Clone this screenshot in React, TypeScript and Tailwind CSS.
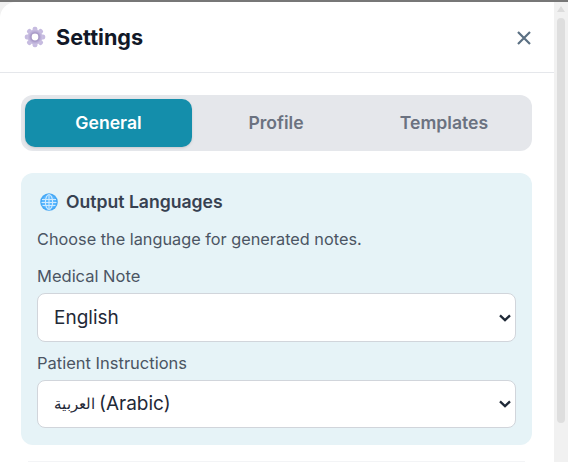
import React from "react";

const font = { fontFamily: "Inter, 'Noto Sans', sans-serif" };

function Gear() {
  const teeth = [0, 45, 90, 135, 180, 225, 270, 315];
  return (
    <svg width="22" height="22" viewBox="0 0 22 22" aria-hidden="true">
      <defs>
        <radialGradient id="g" cx="50%" cy="50%" r="55%">
          <stop offset="30%" stopColor="#8f7fb3" />
          <stop offset="65%" stopColor="#b9acd6" />
          <stop offset="100%" stopColor="#d5cde8" />
        </radialGradient>
      </defs>
      {teeth.map((a) => (
        <rect key={a} x="8.6" y="0.8" width="4.8" height="5" rx="2" fill="#c6bbe0" transform={`rotate(${a} 11 11)`} />
      ))}
      <circle cx="11" cy="11" r="7.6" fill="url(#g)" />
      <circle cx="11" cy="11" r="3.4" fill="#ffffff" />
    </svg>
  );
}

function Globe() {
  return (
    <svg width="18" height="18" viewBox="0 0 18 18" aria-hidden="true">
      <circle cx="9" cy="9" r="8.8" fill="#46a8f5" />
      <circle cx="9" cy="9" r="7.2" fill="#5cb8ff" />
      <g stroke="#cfeaff" strokeWidth="1.1" fill="none">
        <path d="M2 6.500h14M1.500 9.500h15M2.500 12.500h13" />
        <ellipse cx="9" cy="9" rx="3.600" ry="7.500" />
        <path d="M9 2v14" />
      </g>
    </svg>
  );
}

function Field({
  label,
  value,
  options,
  mt,
  h,
  overlay,
}: {
  label: string;
  value: string;
  options: string[];
  mt: string;
  h: string;
  overlay?: React.ReactNode;
}) {
  return (
    <div className={mt}>
      <label className="block text-[16.5px] leading-[20px] text-[#4b5563] mb-[7px]">{label}</label>
      <div className="relative">
        <select
          defaultValue={value}
          className={`block w-full ${h} appearance-none rounded-[8px] border border-[#d1d5db] bg-white pl-[16px] pr-[28px] pt-[2px] text-[19px] ${overlay ? "text-transparent" : "text-[#1f2937]"}`}
          style={font}
        >
          {options.map((o) => (
            <option key={o} value={o}>
              {o}
            </option>
          ))}
        </select>
        {overlay && (
          <span className="absolute left-[17px] top-[1px] bottom-0 flex items-center pointer-events-none text-[19px] text-[#1f2937] whitespace-nowrap">
            {overlay}
          </span>
        )}
        <svg className="absolute right-[5px] top-1/2 -translate-y-1/2 pointer-events-none" width="12" height="8" viewBox="0 0 12 8" aria-hidden="true">
          <path d="M1 1.400l5 4.800 5-4.800" stroke="#1f2937" strokeWidth="2.300" fill="none" />
        </svg>
      </div>
    </div>
  );
}

export default function App() {
  return (
    <div className="w-[568px] h-[462px] overflow-hidden flex flex-col bg-[#777777]" style={font}>
      <div className="h-[2px] shrink-0" />
      <div className="flex flex-1 min-h-0 bg-[#f1f1f1]">
        <div className="w-[554px] shrink-0 bg-white rounded-tl-[16px] overflow-hidden">
          <header className="h-[71px] pt-[1px] border-b border-[#e5e7eb] flex items-center justify-between pl-[24px] pr-[22px]">
            <div className="flex items-center gap-[10px]">
              <Gear />
              <h1 className="text-[21.6px] font-bold text-[#111827]">Settings</h1>
            </div>
            <svg width="16" height="16" viewBox="0 0 16 16" aria-hidden="true">
              <path d="M2 2l12 12M14 2L2 14" stroke="#5b7083" strokeWidth="2.2" fill="none" />
            </svg>
          </header>
          <main className="pl-[21px] pr-[22px] pt-[22px]">
            <div className="flex h-[56px] rounded-[12px] bg-[#e5e7eb] p-[4px]">
              <button className="w-[167px] rounded-[10px] bg-[#148eab] text-white text-[17.6px] font-semibold shadow-sm">General</button>
              <button className="flex-1 text-[#6b7280] text-[17.6px] font-semibold">Profile</button>
              <button className="flex-1 text-[#6b7280] text-[17.6px] font-semibold">Templates</button>
            </div>
            <section className="mt-[22px] h-[272px] rounded-[12px] bg-[#e6f3f7] px-[16px] pt-[18px]">
              <div className="flex items-center gap-[8px]">
                <span className="ml-[3px] flex"><Globe /></span>
                <h2 className="text-[17.6px] leading-[21px] font-semibold text-[#374151]">Output Languages</h2>
              </div>
              <p className="mt-[17px] text-[16.3px] leading-[20px] text-[#4b5563]">Choose the language for generated notes.</p>
              <Field mt="mt-[17px]" h="h-[49px]" label="Medical Note" value="English" options={["English", "Spanish", "French"]} />
              <Field
                mt="mt-[11px]"
                h="h-[48px]"
                label="Patient Instructions"
                value="العربية (Arabic)"
                options={["English", "العربية (Arabic)"]}
                overlay={
                  <span className="flex items-center gap-[4px]">
                    <span className="text-[15px]">العربية</span>
                    <span>(Arabic)</span>
                  </span>
                }
              />
            </section>
            <div className="mt-[16px] mx-[7px] h-[1px] bg-[#f3f4f6]" />
          </main>
        </div>
        <div className="flex-1 relative flex flex-col items-center">
          <svg className="mt-[4px]" width="8" height="6" viewBox="0 0 8 6" aria-hidden="true">
            <path d="M4 0L8 6H0Z" fill="#dcdcdc" />
          </svg>
          <div className="mt-[6px] w-[8px] h-[405px] rounded-[4px] bg-[#dedede]" />
        </div>
      </div>
    </div>
  );
}
